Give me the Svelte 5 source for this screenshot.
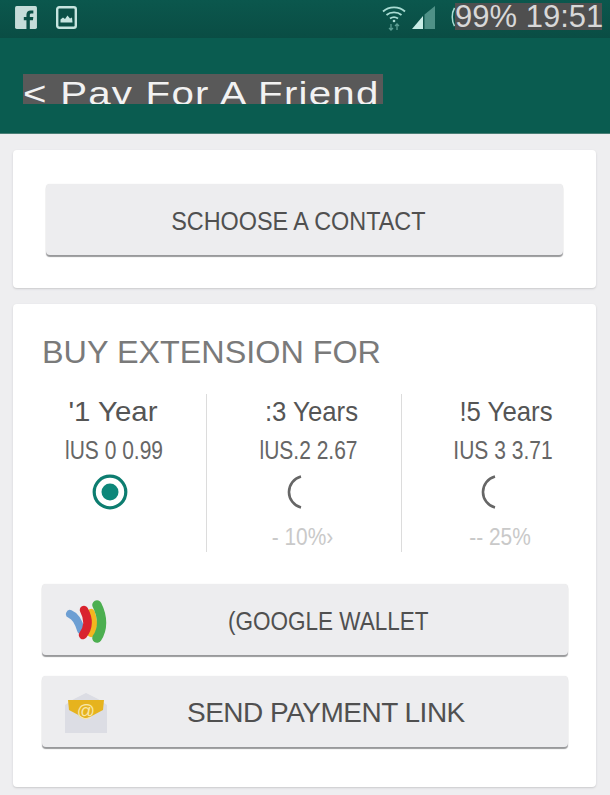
<script>
  const plans = [
    { years: "'1 Year", price: "lUS 0 0.99", off: "", selected: true },
    { years: ":3 Years", price: "lUS.2 2.67", off: "- 10%›", selected: false },
    { years: "!5 Years", price: "IUS 3 3.71", off: "-- 25%", selected: false }
  ];
</script>

<div class="screen">
  <div class="status">
    <div class="left-icons">
      <svg width="22" height="23" viewBox="0 0 20 21">
        <rect x="0" y="0" width="20" height="21" rx="1.500" fill="#c6dcd9" />
        <path d="M13.500 21v-8h2.800l.4-3h-3.200V8.200c0-.9.3-1.400 1.500-1.400h1.700V4.100c-.4 0-1.300-.1-2.400-.1-2.400 0-3.900 1.400-3.900 3.900V10H8v3h2.400v8z" fill="#0b4f46" />
      </svg>
      <svg width="21" height="23" viewBox="0 0 21 23">
        <rect x="1.200" y="1.200" width="18.600" height="20.600" rx="2" fill="#0b4f46" stroke="#c6e4df" stroke-width="2.400" />
        <path d="M4.500 16.500v-3l2.500-2 2 1.500 2.500-3.500 2.500 3 2-1 .5 5z" fill="#c6e4df" />
      </svg>
    </div>
    <div class="right-icons">
      <svg class="wifi" width="24" height="26" viewBox="0 0 24 26" fill="none" stroke="#a9dcd3" stroke-width="1.800">
        <path d="M1 6.500c6-5.500 16-5.500 22 0" />
        <path d="M4.500 10c4-3.500 11-3.500 15 0" />
        <path d="M8 13.500c2.500-1.800 5.500-1.800 8 0" />
        <circle cx="12" cy="16" r="1.300" fill="#a9dcd3" stroke="none" />
        <path d="M9 19v6M7 23l2 2 2-2M15 25v-6M13 21l2-2 2 2" stroke="#5b9e93" stroke-width="1.300" />
      </svg>
      <svg class="signal" width="23" height="23" viewBox="0 0 23 23">
        <path d="M23 0v23H12.500V8.500z" fill="#4f9187" />
        <path d="M11 10v13H0z" fill="#c9ece6" />
      </svg>
      <svg class="battery" width="4" height="24" viewBox="0 0 4 24">
        <path d="M3.500 3c-3 5-3 13 0 18" fill="none" stroke="#a9dcd3" stroke-width="1.500" />
      </svg>
      <span class="clock">99% 19:51</span>
    </div>
  </div>

  <header class="bar">
    <div class="title-mask"><h1>&lt; Pay For A Friend</h1></div>
  </header>

  <main>
    <section class="card contact">
      <button class="btn contact-btn"><span>SCHOOSE A CONTACT</span></button>
    </section>

    <section class="card buy">
      <h2>BUY EXTENSION FOR</h2>
      <div class="plans">
        {#each plans as plan, i}
          <div class="plan plan-{i}">
            <div class="years">{plan.years}</div>
            <div class="price">{plan.price}</div>
            {#if plan.selected}
              <svg class="radio" width="36" height="36" viewBox="0 0 36 36">
                <circle cx="18" cy="18" r="15.800" fill="none" stroke="#0d7d70" stroke-width="3.200" />
                <circle cx="18" cy="18" r="8.500" fill="#0d877a" />
              </svg>
            {:else}
              <svg class="radio" width="36" height="36" viewBox="0 0 36 36">
                <path d="M14 2.500a16 16 0 0 0 0 31" fill="none" stroke="#666" stroke-width="2.600" />
              </svg>
            {/if}
            <div class="off">{plan.off}</div>
          </div>
        {/each}
      </div>

      <button class="btn pay wallet">
        <svg class="pay-icon" width="42" height="44" viewBox="0 0 42 44" fill="none" stroke-linecap="round">
          <path d="M5 15C10 17 14 24 16 31" stroke="#6d9fd3" stroke-width="8" />
          <path d="M26 14C29 22 29 28 26 34" stroke="#f3b61f" stroke-width="8" />
          <path d="M19 11C24 20 24 28 18 36" stroke="#d9232e" stroke-width="8.500" />
          <path d="M32 6C38 18 38 30 32 39" stroke="#4caf50" stroke-width="9.500" />
        </svg>
        <span class="wallet-label">(GOOGLE WALLET</span>
      </button>

      <button class="btn pay link">
        <svg class="pay-icon" width="42" height="40" viewBox="0 0 42 40">
          <path d="M0 12 9 6l12-6 12 6 9 6v28H0z" fill="#dcdde4" />
          <path d="M3 7h36l-1 10-15 8q-2 1-4 0L4 17z" fill="#e6b31e" />
          <text x="21" y="24" text-anchor="middle" class="at">@</text>
        </svg>
        <span class="link-label">SEND PAYMENT LINK</span>
      </button>
    </section>
  </main>
</div>

<style>
  :global(body) {
    margin: 0;
    background: #eeeef0;
  }

  .screen {
    width: 610px;
    height: 795px;
    overflow: hidden;
    font-family: "Liberation Sans", Arial, sans-serif;
    background: #eeeef0;
  }

  .status {
    height: 38px;
    background: linear-gradient(#0b574d, #0a4d44);
    display: flex;
    justify-content: space-between;
    padding: 3px 8px 0 15px;
    box-sizing: border-box;
  }

  .left-icons {
    display: flex;
    gap: 19px;
    padding-top: 3px;
    align-items: flex-start;
  }

  .right-icons {
    display: flex;
    align-items: flex-start;
  }

  .wifi {
    margin: 2px 6px 0 0;
  }

  .signal {
    margin: 3px 16px 0 0;
  }

  .battery {
    margin-top: 2px;
  }

  .clock {
    background: #4f4f4f;
    color: #d8d8d8;
    font-size: 31px;
    line-height: 27px;
    height: 27px;
    width: 147px;
    white-space: nowrap;
  }

  .bar {
    height: 96px;
    background: #0a5c50;
    padding: 36px 0 0 23px;
    box-sizing: border-box;
    border-bottom: 1px solid #4a7f76;
  }

  .title-mask {
    width: 360px;
    height: 30px;
    background: #595959;
    overflow: hidden;
  }

  h1 {
    margin: 0;
    font-size: 33px;
    font-weight: 400;
    line-height: 40px;
    letter-spacing: 1px;
    color: #f2f2f2;
    white-space: nowrap;
    transform: scaleX(1.22);
    transform-origin: left;
  }

  main {
    padding: 16px 14px 0 13px;
    display: flex;
    flex-direction: column;
    gap: 16px;
  }

  .card {
    background: #fff;
    border-radius: 4px;
    box-shadow: 0 1px 2px #c9c9cc;
    box-sizing: border-box;
  }

  .contact {
    height: 138px;
    padding: 34px 33px;
  }

  .btn {
    display: block;
    width: 100%;
    height: 71px;
    border: 0;
    border-radius: 4px;
    background: #ededef;
    box-shadow: 0 2px 1px #98999b, 0 0 1px #dedee0;
    color: #505050;
    font-family: "Liberation Sans", Arial, sans-serif;
    padding: 3px 0 0;
  }

  .contact-btn {
    font-size: 26px;
    padding-right: 12px;
  }

  .contact-btn span {
    display: inline-block;
    transform: scaleX(0.9);
  }

  .buy {
    height: 483px;
    padding: 33px 28px 0 29px;
  }

  h2 {
    margin: 0;
    font-size: 31px;
    line-height: 32px;
    font-weight: 400;
    color: #7a7a7a;
    white-space: nowrap;
    transform: scaleX(1.043);
    transform-origin: left;
  }

  .plans {
    display: grid;
    grid-template-columns: 165px 195px 1fr;
    margin-top: 25px;
    height: 158px;
  }

  .plan {
    text-align: center;
    box-sizing: border-box;
    white-space: nowrap;
  }

  .plan-0 {
    padding-right: 22px;
    border-right: 1px solid #dcdcdc;
  }

  .plan-1 {
    padding-left: 15px;
    border-right: 1px solid #dcdcdc;
  }

  .plan-2 {
    padding-left: 42px;
  }

  .years {
    font-size: 28px;
    line-height: 34px;
    margin-top: 1px;
    color: #555;
    transform: scaleX(0.92);
  }

  .plan-0 .years {
    transform: scaleX(1.05);
  }

  .price {
    font-size: 25px;
    line-height: 30px;
    margin-top: 6px;
    color: #666;
    transform: translateX(-3px) scaleX(0.84);
  }

  .plan-0 .price {
    transform: translateX(1px) scaleX(0.84);
  }

  .radio {
    display: block;
    margin: 9px auto 0;
  }

  .plan-0 .radio {
    transform: translateX(-3px);
  }

  .plan-1 .radio, .plan-2 .radio {
    transform: translateX(-7px);
  }

  .off {
    font-size: 24px;
    line-height: 28px;
    margin-top: 13px;
    color: #c9c9c9;
    transform: translateX(-9px) scaleX(0.87);
  }

  .plan-2 .off {
    transform: translateX(-6px) scaleX(0.87);
  }

  .pay {
    display: flex;
    align-items: center;
    padding-left: 23px;
    margin-top: 32px;
  }

  .link {
    margin-top: 21px;
  }

  .pay-icon {
    flex: none;
  }

  .at {
    font-size: 18px;
    fill: #f8e6a8;
    font-family: "Liberation Sans", Arial, sans-serif;
  }

  .wallet-label {
    margin-left: 121px;
    font-size: 26px;
    transform: scaleX(0.866);
    transform-origin: left;
    white-space: nowrap;
  }

  .link-label {
    margin-left: 80px;
    font-size: 28px;
    letter-spacing: -0.5px;
    white-space: nowrap;
  }
</style>
